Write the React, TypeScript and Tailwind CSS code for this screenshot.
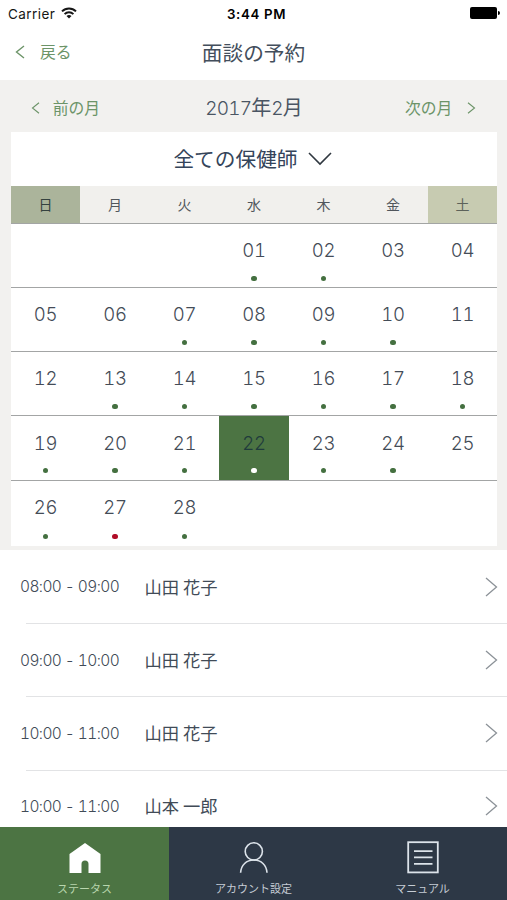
import React from "react";

const WEEKDAYS = ["日", "月", "火", "水", "木", "金", "土"];

const WEEKS: string[][] = [
  ["", "", "", "01", "02", "03", "04"],
  ["05", "06", "07", "08", "09", "10", "11"],
  ["12", "13", "14", "15", "16", "17", "18"],
  ["19", "20", "21", "22", "23", "24", "25"],
  ["26", "27", "28", "", "", "", ""],
];

const BUSY = new Set([
  "01", "02", "07", "08", "09", "10", "13", "14", "15", "16", "17", "18",
  "19", "20", "21", "22", "23", "24", "26", "27", "28",
]);

const SLOTS = [
  { time: "08:00 - 09:00", name: "山田 花子" },
  { time: "09:00 - 10:00", name: "山田 花子" },
  { time: "10:00 - 11:00", name: "山田 花子" },
  { time: "10:00 - 11:00", name: "山本 一郎" },
];

type ChevronProps = { points: string; width: number; height: number; className?: string; stroke?: number };

function Chevron({ points, width, height, className = "", stroke = 1.4 }: ChevronProps) {
  return (
    <svg width={width} height={height} viewBox={`0 0 ${width} ${height}`} fill="none" stroke="currentColor" strokeWidth={stroke} className={`shrink-0 ${className}`}>
      <polyline points={points} />
    </svg>
  );
}

function StatusBar() {
  return (
    <div className="grid h-7 grid-cols-3 items-center pl-2 pr-[7px] font-['Inter','Liberation_Sans',sans-serif] text-[13px] font-normal leading-7 text-[#161616]">
      <div className="flex items-center gap-[6px]">
        <span className="text-[13.5px] tracking-[0.45px]">Carrier</span>
        <svg width="16" height="12" viewBox="0 0 16 12" fill="none" stroke="currentColor" strokeWidth="2" className="-mt-[2px]">
          <path d="M1 4.4a10 10 0 0 1 14 0" />
          <path d="M3.6 7.1a6.3 6.3 0 0 1 8.8 0" />
          <path d="M8 11.6 5.5 9.1a3.6 3.6 0 0 1 5 0z" fill="currentColor" stroke="none" />
        </svg>
      </div>
      <span className="pl-[5px] text-center text-[13.3px] font-semibold tracking-[0.65px] text-black">3:44 PM</span>
      <div className="-mt-[2px] flex items-center justify-end gap-px">
        <span className="h-3 w-[27px] rounded-[2px] bg-black" />
        <span className="h-1 w-[2px] rounded-r-full bg-black" />
      </div>
    </div>
  );
}

function DayCell({ day, last }: { day: string; last: boolean }) {
  const selected = day === "22";
  const dot = selected ? "bg-white" : day === "27" ? "bg-[#b00d27]" : "bg-[#447040]";
  return (
    <div className={`flex flex-col items-center pt-[14.3px] ${selected ? "bg-[#4c7443]" : ""}`}>
      <span className={`h-6 font-['Inter','Liberation_Sans',sans-serif] text-[18.6px] font-[340] tabular-nums leading-6 tracking-[-0.3px] ${selected ? "text-[#1f3b3c]" : "text-[#444c57]"}`}>{day}</span>
      {BUSY.has(day) && <span className={`${last ? "mt-[14.8px]" : "mt-[13.5px]"} size-[5.2px] rounded-full ${dot}`} />}
    </div>
  );
}

function Calendar() {
  return (
    <section className="h-[470px] bg-[#f2f1ef] pl-[10.7px] pr-[9.7px]">
      <div className="grid h-[52px] grid-cols-3 items-center pt-[3px]">
        <div className="flex items-center gap-[13px] pl-5 text-[#6c9468]">
          <Chevron width={9} height={12} points="8,0.8 1.5,6 8,11.2" stroke={1.1} />
          <span className="text-[15.8px] leading-6">前の月</span>
        </div>
        <span className="whitespace-nowrap text-center text-[20px] leading-7 text-[#4a5563]">
          <span className="font-['Inter','Liberation_Sans',sans-serif] text-[19px] font-[340] tabular-nums tracking-[-0.8px]">2017</span>年
          <span className="font-['Inter','Liberation_Sans',sans-serif] text-[19px] font-[340] tabular-nums tracking-[-0.8px]">2</span>月
        </span>
        <div className="flex items-center justify-end gap-[15px] pr-[21px] text-[#6c9468]">
          <span className="text-[15.8px] leading-6">次の月</span>
          <Chevron width={9} height={12} points="1,0.8 7.5,6 1,11.2" stroke={1.1} />
        </div>
      </div>
      <div className="bg-white">
        <div className="flex h-[54px] items-center justify-center gap-[10px] pr-[3px] text-[#34445a]">
          <span className="-mt-[3px] text-[20.7px] leading-7">全ての保健師</span>
          <Chevron width={24} height={14} points="1,1 12,12 23,1" stroke={1.6} className="text-[#303840]" />
        </div>
        <div className="grid h-[37.8px] grid-cols-7 border-b border-[#a3a5a4] bg-[#f1f0ed]">
          {WEEKDAYS.map((d, i) => (
            <div
              key={d}
              className={`flex items-center justify-center text-[14px] ${i === 0 ? "bg-[#abb49b] text-[#34423f]" : i === 6 ? "bg-[#c7cbb1] text-[#5c625a]" : "text-[#50565c]"}`}
            >
              {d}
            </div>
          ))}
        </div>
        {WEEKS.map((week, w) => (
          <div key={w} className={`grid grid-cols-7 ${w < 4 ? "h-[64.2px] border-b border-[#a3a5a5]" : "h-[65px]"}`}>
            {week.map((day, i) => (
              <DayCell key={i} day={day} last={w === 4} />
            ))}
          </div>
        ))}
      </div>
    </section>
  );
}

function SlotList() {
  return (
    <ul className="h-[277px] overflow-hidden">
      {SLOTS.map((s, i) => (
        <li key={i} className="h-[73.3px]">
          <div className="flex h-[73px] items-center pl-[20px] pr-[9px] text-[#414b57]">
            <span className="w-[124.5px] pt-px font-['Inter','Liberation_Sans',sans-serif] text-[15.5px] font-[340] tabular-nums tracking-[-0.6px]">{s.time}</span>
            <span className="flex-1 text-[17.3px]">{s.name}</span>
            <Chevron width={13} height={20} points="1,1 11.5,10 1,19" stroke={1.3} className="text-[#8c9298]" />
          </div>
          <div className="ml-[26px] h-px bg-[#e2e3e5]" />
        </li>
      ))}
    </ul>
  );
}

function TabBar() {
  return (
    <nav className="grid h-[73px] grid-cols-3 text-[11px] leading-4">
      <div className="flex flex-col items-center bg-[#4c7443] pt-[15px] text-[#b9d6ae]">
        <svg width="32" height="32" viewBox="0 0 32 32" className="text-white">
          <path d="M16 1 31.5 12v19H19.5V22a3.5 3.5 0 0 0-7 0v9H.5V12z" fill="currentColor" />
        </svg>
        <span className="mt-[6px]">ステータス</span>
      </div>
      <div className="flex flex-col items-center bg-[#2d3846] pt-[15px] text-[#c5ccd5]">
        <svg width="32" height="32" viewBox="0 0 32 32" fill="none" stroke="#dce3ea" strokeWidth="1.6">
          <circle cx="15.8" cy="9.4" r="8.6" />
          <path d="M2.6 30.8C3 23 8.5 18 15.8 18S28.6 23 29 30.8" />
        </svg>
        <span className="mt-[6px]">アカウント設定</span>
      </div>
      <div className="flex flex-col items-center bg-[#2d3846] pt-[14px] text-[#c5ccd5]">
        <svg width="32" height="33" viewBox="0 0 32 33" fill="none" stroke="#dce3ea" strokeWidth="1.8">
          <rect x="1.2" y="1.2" width="29.6" height="30.2" />
          <path d="M7 10.2h18.5M7 16.3h18.5M7 22.8h18.5" />
        </svg>
        <span className="mt-[6px]">マニュアル</span>
      </div>
    </nav>
  );
}

export default function App() {
  return (
    <main className="flex h-[900px] w-[507px] flex-col overflow-hidden bg-white font-['Noto_Sans_CJK_JP',sans-serif] font-normal">
      <StatusBar />
      <header className="grid h-[52px] grid-cols-3 items-center pb-[5px]">
        <div className="flex items-center gap-[15px] pl-[15px] text-[#6c9468]">
          <Chevron width={10} height={14} points="9,1 1.5,7 9,13" stroke={1.4} />
          <span className="text-[15.8px] leading-6">戻る</span>
        </div>
        <h1 className="text-center text-[20.7px] leading-8 text-[#434e5c]">面談の予約</h1>
      </header>
      <Calendar />
      <SlotList />
      <TabBar />
    </main>
  );
}
